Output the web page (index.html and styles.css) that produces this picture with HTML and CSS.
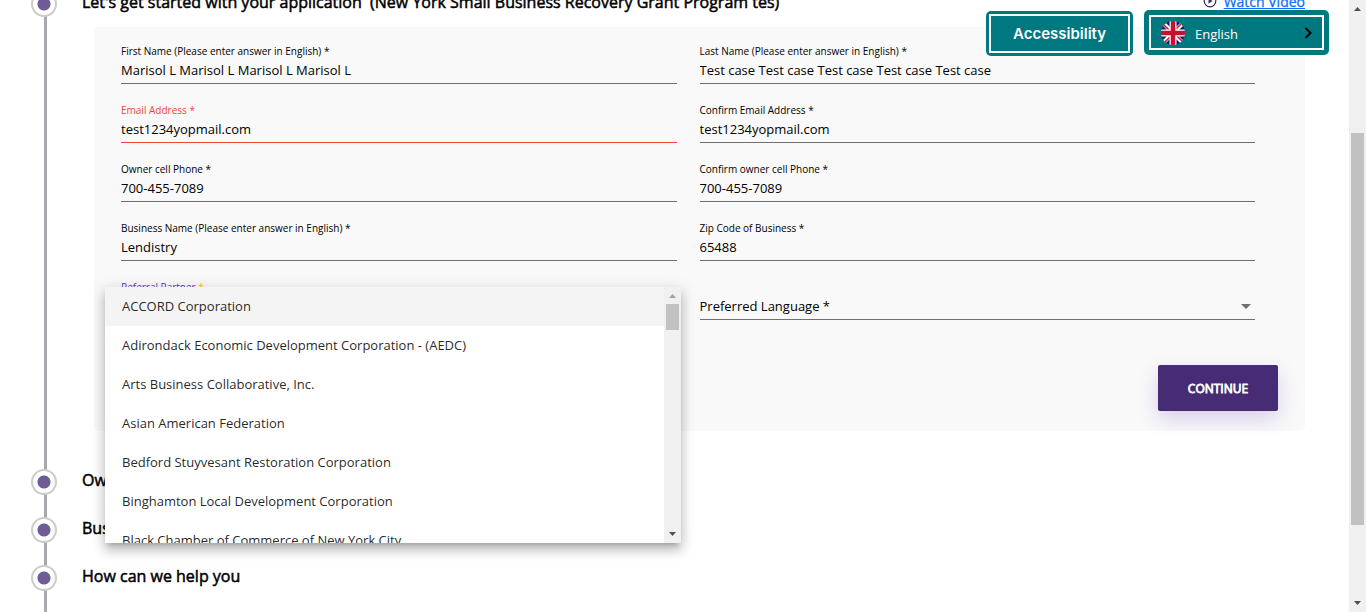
FILE: index.html
```html
<!DOCTYPE html>
<html lang="en">
<head>
<meta charset="utf-8">
<title>New York Small Business Recovery Grant Program</title>
<link rel="stylesheet" href="styles.css">
</head>
<body>
<main class="page">
  <ol class="steps">
    <li class="step step-open">
      <span class="marker"></span>
      <div class="step-body">
        <header class="step-header">
          <h2 class="step-title">Let's get started with your application &nbsp;(New York Small Business Recovery Grant Program tes)</h2>
          <a class="watch" href="#video">
            <svg class="watch-icon" viewBox="0 0 14 14" aria-hidden="true"><circle cx="7" cy="7" r="5.8" fill="none" stroke="#33264d" stroke-width="1.2"/><path d="M5.5 4.2 9.6 7 5.5 9.8z" fill="#462c74"/></svg>
            <span class="watch-text">Watch Video</span>
          </a>
        </header>
        <form class="card">
          <div class="fields">
            <div class="field"><label for="first">First Name (Please enter answer in English) *</label><input id="first" type="text" value="Marisol L Marisol L Marisol L Marisol L"></div>
            <div class="field"><label for="last">Last Name (Please enter answer in English) *</label><input id="last" type="text" value="Test case Test case Test case Test case Test case"></div>
            <div class="field field-error"><label for="email">Email Address *</label><input id="email" type="text" value="test1234yopmail.com"></div>
            <div class="field"><label for="email2">Confirm Email Address *</label><input id="email2" type="text" value="test1234yopmail.com"></div>
            <div class="field"><label for="phone">Owner cell Phone *</label><input id="phone" type="tel" value="700-455-7089"></div>
            <div class="field"><label for="phone2">Confirm owner cell Phone *</label><input id="phone2" type="tel" value="700-455-7089"></div>
            <div class="field"><label for="business">Business Name (Please enter answer in English) *</label><input id="business" type="text" value="Lendistry"></div>
            <div class="field"><label for="zip">Zip Code of Business *</label><input id="zip" type="text" value="65488"></div>
            <div class="field field-active">
              <label for="partner">Referral Partner <span class="required">*</span></label>
              <select id="partner"><option></option></select>
              <div class="panel">
                <ul class="options" role="listbox" aria-label="Referral Partner">
                  <li class="option option-active" role="option" aria-selected="true">ACCORD Corporation</li>
                  <li class="option" role="option">Adirondack Economic Development Corporation - (AEDC)</li>
                  <li class="option" role="option">Arts Business Collaborative, Inc.</li>
                  <li class="option" role="option">Asian American Federation</li>
                  <li class="option" role="option">Bedford Stuyvesant Restoration Corporation</li>
                  <li class="option" role="option">Binghamton Local Development Corporation</li>
                  <li class="option" role="option">Black Chamber of Commerce of New York City</li>
                </ul>
                <div class="scrollbar" aria-hidden="true">
                  <svg class="arrow arrow-muted" viewBox="0 0 17 17"><path d="M5 11 8.5 7 12 11z"/></svg>
                  <div class="track"><div class="thumb thumb-list"></div></div>
                  <svg class="arrow" viewBox="0 0 17 17"><path d="M5 6h7L8.500 10z"/></svg>
                </div>
              </div>
            </div>
            <div class="field field-select">
              <select id="language" aria-label="Preferred Language"><option>Preferred Language *</option></select>
              <svg class="caret" viewBox="0 0 10 5" aria-hidden="true"><path d="M0 0h10L5 5z"/></svg>
            </div>
          </div>
          <button class="continue" type="button">CONTINUE</button>
        </form>
      </div>
    </li>
    <li class="step"><span class="marker"></span><h2 class="step-title">Owner</h2></li>
    <li class="step"><span class="marker"></span><h2 class="step-title">Business</h2></li>
    <li class="step"><span class="marker"></span><h2 class="step-title">How can we help you</h2></li>
  </ol>
</main>
<div class="scrollbar" aria-hidden="true">
  <svg class="arrow" viewBox="0 0 17 17"><path d="M5 11 8.500 7 12 11z"/></svg>
  <div class="track track-page"><div class="thumb thumb-page"></div></div>
  <svg class="arrow" viewBox="0 0 17 17"><path d="M5 6h7L8.500 10z"/></svg>
</div>
<div class="tools">
  <button class="tool tool-access" type="button"><span class="tool-inner">Accessibility</span></button>
  <button class="tool tool-lang" type="button">
    <span class="tool-inner">
      <svg class="flag" viewBox="0 0 24 24" aria-hidden="true">
        <defs><clipPath id="round"><circle cx="12" cy="12" r="12"/></clipPath></defs>
        <g clip-path="url(#round)">
          <path fill="#012169" d="M0 0h24v24H0z"/>
          <path stroke="#fff" stroke-width="4" d="M2 2l20 20M22 2 2 22"/>
          <path stroke="#c8102e" stroke-width="1.500" d="M2 3l9 9M22 21l-9-9M21 2l-9 9M3 22l9-9"/>
          <path stroke="#fff" stroke-width="7" d="M12 0v24M0 12h24"/>
          <path stroke="#c8102e" stroke-width="4.500" d="M12 0v24M0 12h24"/>
        </g>
      </svg>
      <span class="lang-name">English</span>
      <svg class="chevron" viewBox="0 0 8 12" aria-hidden="true"><path d="M1.500 1l5 5-5 5" fill="none" stroke="#000" stroke-width="2"/></svg>
    </span>
  </button>
</div>
</body>
</html>
```
FILE: styles.css
```css
* { box-sizing: border-box; }

body {
  display: flex;
  height: 100vh;
  margin: 0;
  overflow: hidden;
  background: #fff;
  color: #000;
  font-family: "Open Sans", sans-serif;
  font-size: 13px;
}

.page {
  flex: 1;
  min-width: 0;
  overflow: hidden;
}

/* Timeline */
.steps {
  margin: -9px 0 0;
  padding: 0 44px 0 31px;
  list-style: none;
}

.step {
  display: flex;
  gap: 25px;
  min-height: 48px;
  background: linear-gradient(#aaa8ad, #aaa8ad) 13px 0 / 3px 100% no-repeat;
}

.step-open { padding-bottom: 38px; }

.step-body {
  flex: 1;
  min-width: 0;
}

.marker {
  flex: none;
  width: 26px;
  height: 26px;
  border: 2px solid #ccc;
  border-radius: 50%;
  background: radial-gradient(circle, #6f5b97 6px, #fff 7px);
}

.step-title {
  margin: 0;
  font-size: 16px;
  font-weight: 400;
  line-height: 22px;
  -webkit-text-stroke: 0.5px #000;
}

.step-header {
  display: flex;
  justify-content: space-between;
  height: 36px;
}

.watch {
  display: flex;
  gap: 7px;
  align-items: center;
  height: 20px;
  color: #0d6efd;
  font-size: 14px;
  font-weight: 400;
  text-decoration: none;
  -webkit-text-stroke: 0.3px #0d6efd;
}

.watch-text { text-decoration: underline; }

.watch-icon {
  width: 14px;
  height: 14px;
}

/* Form card */
.card {
  display: flex;
  flex-direction: column;
  margin-left: 12px;
  padding: 0 27px 20px;
  border-radius: 5px;
  background: #f9f9f9;
}

.fields {
  display: grid;
  grid-template-columns: 1fr 1fr;
  grid-template-rows: 57px;
  grid-auto-rows: 59px;
  column-gap: 23px;
  margin-right: 23px;
}

.field {
  position: relative;
  display: flex;
  flex-direction: column;
  justify-content: flex-end;
  min-width: 0;
}

.field label {
  padding-bottom: 1px;
  font-size: 10px;
  line-height: 14px;
}

.field input,
.field select {
  width: 100%;
  height: 25px;
  padding: 0 0 2px;
  border: 0;
  border-bottom: 1px solid #707070;
  border-radius: 0;
  outline: 0;
  background: none;
  appearance: none;
  color: #000;
  font: inherit;
}

.field-error label { color: #f44336; }
.field-error input { border-color: #f44336; }
.field-active label { color: #673ab7; }
.required { color: #ffc107; }

.caret {
  position: absolute;
  right: 4px;
  bottom: 11px;
  width: 10px;
  height: 5px;
  fill: #707070;
}

.continue {
  align-self: flex-end;
  width: 120px;
  height: 46px;
  margin-top: 45px;
  border: 0;
  border-radius: 2px;
  background: #462c74;
  box-shadow: 0 8px 20px rgba(103, 58, 183, .22);
  color: #fff;
  font: 400 12px "Open Sans", sans-serif;
  -webkit-text-stroke: 0.8px #fff;
}

/* Open drop-down */
.panel {
  position: absolute;
  z-index: 2;
  top: 26px;
  left: -16px;
  right: -4px;
  display: flex;
  height: 256px;
  background: #fff;
  box-shadow: 0 5px 5px -3px rgba(0, 0, 0, .2), 0 8px 10px 1px rgba(0, 0, 0, .14), 0 3px 14px 2px rgba(0, 0, 0, .12);
}

.options {
  flex: 1;
  margin: 0;
  padding: 0;
  overflow: hidden;
  list-style: none;
}

.option {
  height: 39px;
  padding: 0 17px;
  color: rgba(0, 0, 0, .87);
  line-height: 39px;
}

.option-active { background: #f4f4f4; }

/* Scrollbars */
.scrollbar {
  display: flex;
  flex: none;
  flex-direction: column;
  width: 17px;
  background: #f0f0f0;
}

.arrow {
  width: 17px;
  height: 17px;
  fill: #505050;
}

.arrow-muted { fill: #a3a3a3; }
.track { flex: 1; }
.track-page { padding-top: 116px; }

.thumb {
  margin: 0 2px;
  background: #c1c1c1;
}

.thumb-list { height: 26px; }
.thumb-page { height: 392px; }

/* Floating tools */
.tools {
  position: absolute;
  z-index: 3;
  top: 10px;
  right: 37px;
  display: flex;
  gap: 11px;
}

.tool {
  height: 45px;
  border: 0;
  border-radius: 5px;
  background: #007880;
  color: #fff;
}

.tool-access {
  width: 147px;
  margin-top: 1px;
  padding: 3px;
  font: 600 15px Inter, sans-serif;
}

.tool-lang {
  width: 185px;
  padding: 5px;
  font: 13px "Open Sans", sans-serif;
}

.tool-inner {
  display: flex;
  align-items: center;
  justify-content: center;
  height: 100%;
  border: 2px solid #fff;
}

.tool-lang .tool-inner {
  gap: 10px;
  padding: 0 10px;
}

.flag {
  width: 24px;
  height: 24px;
}

.lang-name {
  flex: 1;
  padding-top: 2px;
  text-align: left;
}

.chevron {
  width: 8px;
  height: 12px;
}
```
